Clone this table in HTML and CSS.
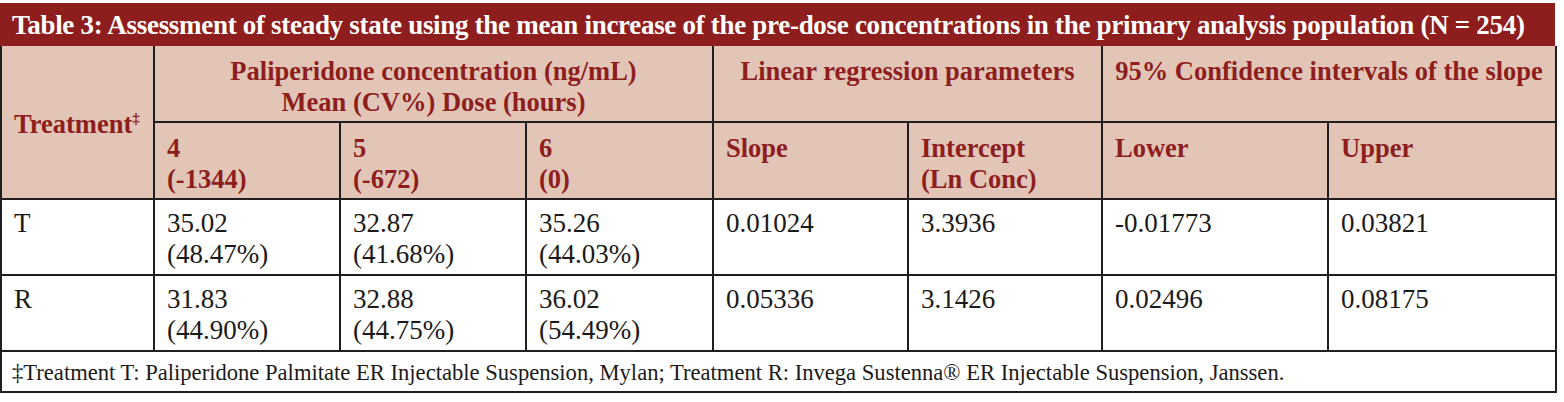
FILE: index.html
```html
<!DOCTYPE html>
<html>
<head>
<meta charset="utf-8">
<link rel="stylesheet" href="styles.css">
</head>
<body>
<div class="wrap">
  <div class="title">Table 3: Assessment of steady state using the mean increase of the pre-dose concentrations in the primary analysis population (N = 254)</div>
  <table class="tbl">
    <colgroup>
      <col class="c1"><col class="c2"><col class="c3"><col class="c4"><col class="c5"><col class="c6"><col class="c7"><col class="c8">
    </colgroup>
    <thead>
      <tr class="h1">
        <th rowspan="2" class="mid">Treatment<sup>‡</sup></th>
        <th colspan="3" class="center">Paliperidone concentration (ng/mL)<br>Mean (CV%) Dose (hours)</th>
        <th colspan="2" class="center">Linear regression parameters</th>
        <th colspan="2" class="center">95% Confidence intervals of the slope</th>
      </tr>
      <tr class="h2">
        <th>4<br>(-1344)</th>
        <th>5<br>(-672)</th>
        <th>6<br>(0)</th>
        <th>Slope</th>
        <th>Intercept<br>(Ln Conc)</th>
        <th>Lower</th>
        <th>Upper</th>
      </tr>
    </thead>
    <tbody>
      <tr class="r">
        <td>T</td>
        <td>35.02<br>(48.47%)</td>
        <td>32.87<br>(41.68%)</td>
        <td>35.26<br>(44.03%)</td>
        <td>0.01024</td>
        <td>3.3936</td>
        <td>-0.01773</td>
        <td>0.03821</td>
      </tr>
      <tr class="r">
        <td>R</td>
        <td>31.83<br>(44.90%)</td>
        <td>32.88<br>(44.75%)</td>
        <td>36.02<br>(54.49%)</td>
        <td>0.05336</td>
        <td>3.1426</td>
        <td>0.02496</td>
        <td>0.08175</td>
      </tr>
      <tr class="foot">
        <td colspan="8">‡Treatment T: Paliperidone Palmitate ER Injectable Suspension, Mylan; Treatment R: Invega Sustenna® ER Injectable Suspension, Janssen.</td>
      </tr>
    </tbody>
  </table>
</div>
</body>
</html>
```
FILE: styles.css
```css
html, body {
  margin: 0;
  padding: 0;
  background: #ffffff;
}
body {
  padding-top: 3px;
  font-family: "Liberation Serif", "Times New Roman", serif;
}
.wrap {
  width: 1555px;
}
.title {
  background: #8e1e1e;
  color: #ffffff;
  font-weight: bold;
  font-size: 27px;
  letter-spacing: -0.3px;
  height: 43px;
  line-height: 41px;
  padding-top: 2px;
  padding-left: 12px;
  white-space: nowrap;
  box-sizing: border-box;
  overflow: hidden;
}
.tbl {
  width: 1555px;
  border-collapse: collapse;
  table-layout: fixed;
}
.c1 { width: 153px; }
.c2 { width: 186px; }
.c3 { width: 186px; }
.c4 { width: 187px; }
.c5 { width: 195px; }
.c6 { width: 194px; }
.c7 { width: 226px; }
.c8 { width: 228px; }
.tbl th, .tbl td {
  border: 2px solid #1f1f1f;
  text-align: left;
  vertical-align: top;
  padding: 0 12px;
  font-size: 27px;
  line-height: 31px;
  box-sizing: border-box;
}
.tbl th {
  background: #e2c5b7;
  color: #8e1e1e;
  font-weight: bold;
  font-size: 26.5px;
}
.tbl th.center { text-align: center; padding-left: 4px; padding-right: 4px; }
.tbl th.mid { vertical-align: middle; padding-left: 12px; padding-top: 5px; }
.tbl sup {
  font-size: 15px;
  line-height: 0;
  vertical-align: 10px;
}
.h1 th { height: 76px; padding-top: 10px; }
.h2 th { height: 77px; padding-top: 10px; }
.r td {
  height: 76px;
  padding-top: 8px;
  color: #1a1a1a;
}
.foot td {
  height: 41px;
  font-size: 22.6px;
  line-height: 24px;
  padding-top: 9px;
  padding-left: 10px;
  color: #1a1a1a;
  white-space: nowrap;
}
.tbl tr:first-child th { border-top: none; }
```
